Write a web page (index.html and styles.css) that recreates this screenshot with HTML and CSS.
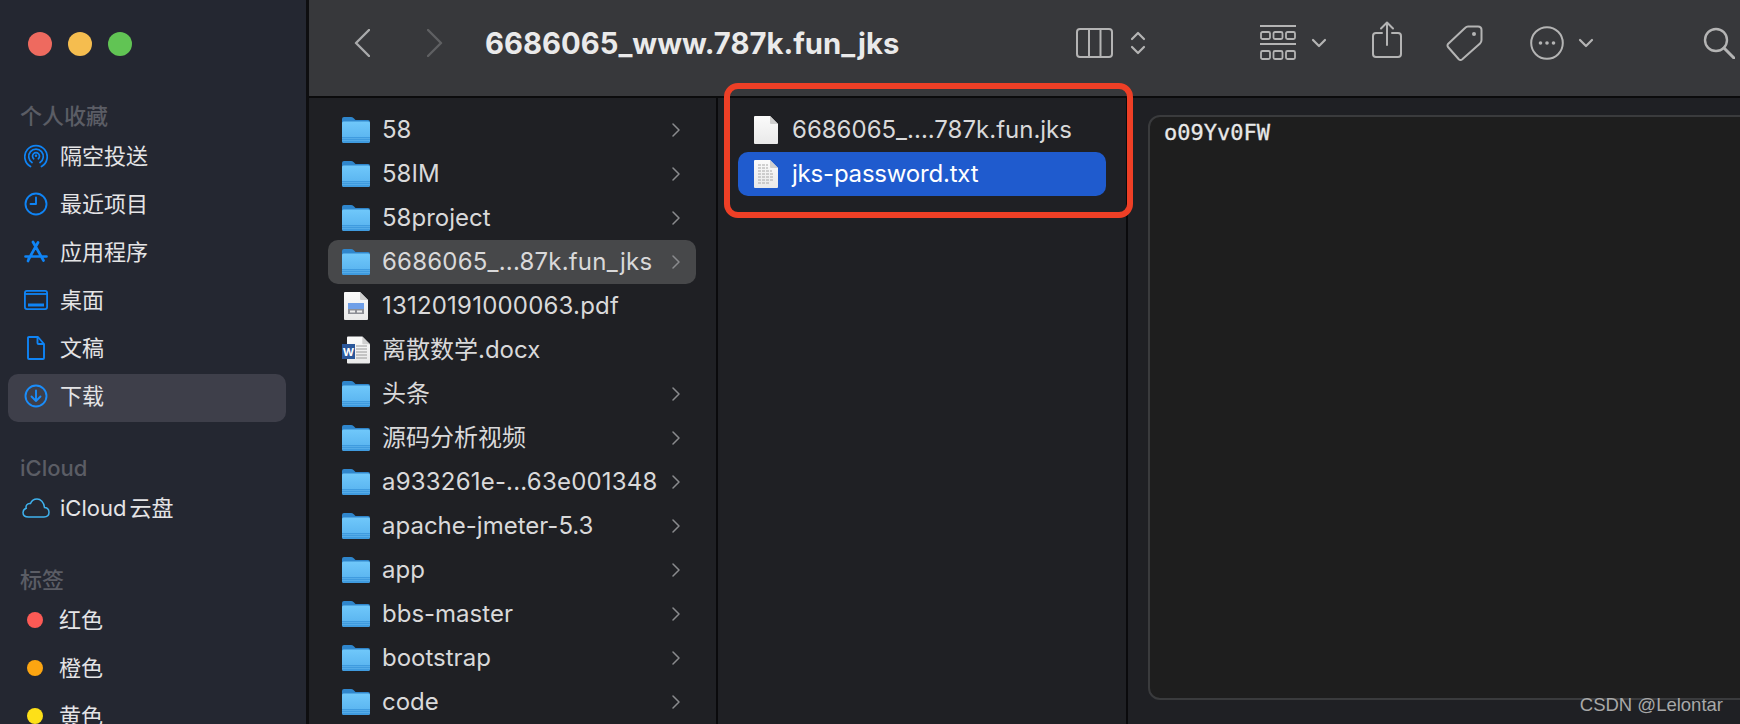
FILE: index.html
```html
<!DOCTYPE html>
<html lang="zh-CN">
<head>
    <meta charset="UTF-8">
    <meta name="viewport" content="width=device-width, initial-scale=1.0">
    <title>6686065_www.787k.fun_jks</title>
    <link rel="stylesheet" href="styles.css">
</head>
<body>

<svg class="defs" width="0" height="0" aria-hidden="true">
    <defs>
        <linearGradient id="folderFront" x1="0" y1="0" x2="0" y2="1">
            <stop offset="0" stop-color="#70c8fa"/>
            <stop offset="1" stop-color="#55b0ee"/>
        </linearGradient>
        <linearGradient id="paper" x1="0" y1="0" x2="0" y2="1">
            <stop offset="0" stop-color="#fbfbfb"/>
            <stop offset="1" stop-color="#e9e9e9"/>
        </linearGradient>
        <symbol id="folder" viewBox="0 0 28 26">
            <path d="M0 2q0-2 2-2h7q1.500 0 2.500 1l2 2H26q2 0 2 2v6H0z" fill="#2f86cc"/>
            <path d="M0 6q0-1.500 1.500-1.500h25Q28 4.500 28 6v18q0 2-2 2H2q-2 0-2-2z" fill="url(#folderFront)"/>
            <path d="M0 20h28v4q0 2-2 2H2q-2 0-2-2z" fill="#3f9bdf"/>
            <path d="M0 21.500h28M0 23.500h28" stroke="#6cbcf0" stroke-width=".5"/>
        </symbol>
        <symbol id="chevron" viewBox="0 0 8 14">
            <path d="M1 1l6 6-6 6" fill="none" stroke="#8a8b8e" stroke-width="1.500" stroke-linecap="round" stroke-linejoin="round"/>
        </symbol>
        <symbol id="page" viewBox="0 0 24 28">
            <path d="M1 0h15l8 8v19q0 1-1 1H1q-1 0-1-1V1q0-1 1-1z" fill="url(#paper)"/>
            <path d="M16 0l8 8h-7q-1 0-1-1z" fill="#cfcfcf"/>
        </symbol>
        <symbol id="down" viewBox="0 0 16 10">
            <path d="M2 2l6 6 6-6" fill="none" stroke="#b4b4b4" stroke-width="2.200" stroke-linecap="round" stroke-linejoin="round"/>
        </symbol>
    </defs>
</svg>

<div class="window">
    <aside class="sidebar">
        <div class="traffic">
            <span class="light light-red"></span>
            <span class="light light-yellow"></span>
            <span class="light light-green"></span>
        </div>

        <div class="side-title first">个人收藏</div>
        <div class="side-item">
            <svg class="side-icon" viewBox="0 0 24 24" fill="none" stroke="#0f84f5" stroke-width="1.700" stroke-linecap="round">
                <path d="M6.500 22.500a11.200 11.200 0 1 1 11 0"/>
                <path d="M8 18.500a7.300 7.300 0 1 1 8 0"/>
                <path d="M9.700 14.800a3.500 3.500 0 1 1 4.600 0"/>
                <circle cx="12" cy="11.800" r="1.200" fill="#0f84f5" stroke="none"/>
            </svg>
            <span>隔空投送</span>
        </div>
        <div class="side-item">
            <svg class="side-icon" viewBox="0 0 24 24" fill="none" stroke="#0f84f5" stroke-width="1.900" stroke-linecap="round" stroke-linejoin="round">
                <circle cx="12" cy="12" r="10.500"/>
                <path d="M12 5.500V12H6.500"/>
            </svg>
            <span>最近项目</span>
        </div>
        <div class="side-item">
            <svg class="side-icon" viewBox="0 0 24 24" fill="none" stroke="#0f84f5" stroke-width="2.700" stroke-linecap="round">
                <path d="M9 2l10.500 18.500M14 2.500L5 18.500M1.500 16.500h21"/>
                <path d="M4 21l1-2.500"/>
            </svg>
            <span>应用程序</span>
        </div>
        <div class="side-item">
            <svg class="side-icon" viewBox="0 0 24 20" fill="none" stroke="#0f84f5" stroke-width="1.800">
                <rect x=".9" y=".9" width="22.200" height="18.200" rx="2"/>
                <path d="M1 4h22"/>
                <rect x="4" y="13.500" width="16" height="3" fill="#0f84f5" stroke="none"/>
            </svg>
            <span>桌面</span>
        </div>
        <div class="side-item">
            <svg class="side-icon" viewBox="0 0 24 24" fill="none" stroke="#0f84f5" stroke-width="1.900" stroke-linejoin="round">
                <path d="M5 1h9l6 7v14q0 1-1 1H5q-1 0-1-1V2q0-1 1-1z"/>
                <path d="M13.500 1v6q0 1 1 1H20"/>
            </svg>
            <span>文稿</span>
        </div>
        <div class="side-item active">
            <svg class="side-icon" viewBox="0 0 24 24" fill="none" stroke="#1a8dfa" stroke-width="1.900" stroke-linecap="round" stroke-linejoin="round">
                <circle cx="12" cy="12" r="10.500"/>
                <path d="M12 6.500V17M7.500 12.500L12 17l4.500-4.500"/>
            </svg>
            <span>下载</span>
        </div>

        <div class="side-title">iCloud</div>
        <div class="side-item">
            <svg class="side-icon cloud" viewBox="0 0 28 20" fill="none" stroke="#3fb2ee" stroke-width="1.500">
                <path d="M6.500 19H22q5 0 5-4.700 0-4.300-4.500-4.800C22 4 18.500 1 15 1c-3.500 0-5.500 2-6.500 4.500C5 5 3.500 8 4.200 10.200 2 11 1 12.800 1 14.500 1 17 3 19 6.500 19z"/>
            </svg>
            <span class="tight-space">iCloud 云盘</span>
        </div>

        <div class="side-title">标签</div>
        <div class="side-item"><i class="dot dot-red"></i><span>红色</span></div>
        <div class="side-item"><i class="dot dot-orange"></i><span>橙色</span></div>
        <div class="side-item"><i class="dot dot-yellow"></i><span>黄色</span></div>
    </aside>

    <main class="main">
        <header class="toolbar">
            <svg class="nav-arrow" viewBox="0 0 16 28" fill="none" stroke="#a9aaab" stroke-width="2.400" stroke-linecap="round" stroke-linejoin="round"><path d="M15 1L2 14l13 13"/></svg>
            <svg class="nav-arrow forward" viewBox="0 0 16 28" fill="none" stroke="#5f6062" stroke-width="2.400" stroke-linecap="round" stroke-linejoin="round"><path d="M1 1l13 13L1 27"/></svg>
            <h1 class="path-title">6686065_www.787k.fun_jks</h1>

            <svg class="tool tool-columns" viewBox="0 0 37 30" fill="none" stroke="#b4b4b4" stroke-width="2"><rect x="1" y="1" width="35" height="28" rx="3"/><path d="M13 1v28M24.500 1v28"/></svg>
            <svg class="tool tool-updown" viewBox="0 0 16 26" fill="none" stroke="#b4b4b4" stroke-width="2.200" stroke-linecap="round" stroke-linejoin="round"><path d="M2 9l6-6 6 6M2 17l6 6 6-6"/></svg>
            <svg class="tool tool-grid" viewBox="0 0 36 36" fill="none" stroke="#b4b4b4" stroke-width="1.800">
                <path d="M0 1h36M0 19h36" stroke-width="2.200"/>
                <rect x="1" y="7" width="9" height="7" rx="1.500"/><rect x="13.500" y="7" width="9" height="7" rx="1.500"/><rect x="26" y="7" width="9" height="7" rx="1.500"/>
                <rect x="1" y="26" width="9" height="8" rx="1.500"/><rect x="13.500" y="26" width="9" height="8" rx="1.500"/><rect x="26" y="26" width="9" height="8" rx="1.500"/>
            </svg>
            <svg class="tool tool-caret"><use href="#down"/></svg>
            <svg class="tool tool-share" viewBox="0 0 30 38" fill="none" stroke="#b4b4b4" stroke-width="2" stroke-linecap="round" stroke-linejoin="round"><path d="M10 12H4q-3 0-3 3v18q0 3 3 3h22q3 0 3-3V15q0-3-3-3h-6M15 24V2M9 7.500L15 1.500l6 6"/></svg>
            <svg class="tool tool-tag" viewBox="0 0 37 36" fill="none" stroke="#b4b4b4" stroke-width="2" stroke-linejoin="round"><path d="M22 1.500h10q3.500 0 3.500 3.500v10q0 2-1.500 3.500L16 34.500q-1.500 1-3 0L2 22q-1-1.500 0-3L19 3q1.500-1.500 3-1.500z"/><circle cx="28" cy="9" r="2" fill="#b4b4b4" stroke="none"/></svg>
            <svg class="tool tool-more" viewBox="0 0 34 34" fill="none" stroke="#b4b4b4" stroke-width="2"><circle cx="17" cy="17" r="15.800"/><g fill="#b4b4b4" stroke="none"><circle cx="10.500" cy="17" r="1.800"/><circle cx="17" cy="17" r="1.800"/><circle cx="23.500" cy="17" r="1.800"/></g></svg>
            <svg class="tool tool-caret second"><use href="#down"/></svg>
            <svg class="tool tool-search" viewBox="0 0 32 32" fill="none" stroke="#b4b4b4" stroke-width="2.400" stroke-linecap="round"><circle cx="13" cy="13" r="11"/><path d="M21 21l10 10" stroke-width="3"/></svg>
        </header>

        <div class="columns">
            <section class="column column-parent">
                <div class="row"><svg class="file-icon"><use href="#folder"/></svg><span class="name">58</span><svg class="arrow"><use href="#chevron"/></svg></div>
                <div class="row"><svg class="file-icon"><use href="#folder"/></svg><span class="name">58IM</span><svg class="arrow"><use href="#chevron"/></svg></div>
                <div class="row"><svg class="file-icon"><use href="#folder"/></svg><span class="name">58project</span><svg class="arrow"><use href="#chevron"/></svg></div>
                <div class="row open"><svg class="file-icon"><use href="#folder"/></svg><span class="name digits">6686065_...87k.fun_jks</span><svg class="arrow"><use href="#chevron"/></svg></div>
                <div class="row">
                    <svg class="file-icon" viewBox="0 0 28 28">
                        <use href="#page" x="2" width="24" height="28"/>
                        <rect x="6" y="11" width="16" height="6" fill="#6f9fe8"/>
                        <rect x="6" y="17" width="16" height="5" fill="#8d8f96"/>
                        <rect x="8" y="18.500" width="5" height="2" fill="#eee"/>
                        <rect x="15" y="18.500" width="5" height="2" fill="#eee"/>
                    </svg>
                    <span class="name digits">13120191000063.pdf</span>
                </div>
                <div class="row">
                    <svg class="file-icon" viewBox="0 0 28 28">
                        <use href="#page" x="5" width="23" height="28"/>
                        <path d="M14 10h11M14 13h11M14 16h11M14 19h11M14 22h11" stroke="#9a9a9a"/>
                        <rect x="0" y="8" width="13" height="15" fill="#2b579a"/>
                        <text class="word-mark" x="6.500" y="19.500" text-anchor="middle">W</text>
                    </svg>
                    <span class="name cjk">离散数学.docx</span>
                </div>
                <div class="row"><svg class="file-icon"><use href="#folder"/></svg><span class="name cjk">头条</span><svg class="arrow"><use href="#chevron"/></svg></div>
                <div class="row"><svg class="file-icon"><use href="#folder"/></svg><span class="name cjk">源码分析视频</span><svg class="arrow"><use href="#chevron"/></svg></div>
                <div class="row"><svg class="file-icon"><use href="#folder"/></svg><span class="name digits">a933261e-...63e001348</span><svg class="arrow"><use href="#chevron"/></svg></div>
                <div class="row"><svg class="file-icon"><use href="#folder"/></svg><span class="name">apache-jmeter-5.3</span><svg class="arrow"><use href="#chevron"/></svg></div>
                <div class="row"><svg class="file-icon"><use href="#folder"/></svg><span class="name">app</span><svg class="arrow"><use href="#chevron"/></svg></div>
                <div class="row"><svg class="file-icon"><use href="#folder"/></svg><span class="name">bbs-master</span><svg class="arrow"><use href="#chevron"/></svg></div>
                <div class="row"><svg class="file-icon"><use href="#folder"/></svg><span class="name">bootstrap</span><svg class="arrow"><use href="#chevron"/></svg></div>
                <div class="row"><svg class="file-icon"><use href="#folder"/></svg><span class="name">code</span><svg class="arrow"><use href="#chevron"/></svg></div>
            </section>

            <section class="column column-files">
                <div class="row">
                    <svg class="file-icon doc-icon"><use href="#page"/></svg>
                    <span class="name">6686065_....787k.fun.jks</span>
                </div>
                <div class="row selected">
                    <svg class="file-icon doc-icon" viewBox="0 0 24 28">
                        <use href="#page" width="24" height="28"/>
                        <path d="M4 5h10M4 8h10M4 11h14M4 14h16M4 17h16M4 20h16M4 23h12" stroke="#a8a8a8" stroke-dasharray="3 1"/>
                    </svg>
                    <span class="name">jks-password.txt</span>
                </div>
            </section>

            <section class="preview">
                <div class="preview-box">o09Yv0FW</div>
            </section>
        </div>
    </main>

    <div class="annotation"></div>
    <div class="watermark">CSDN @Lelontar</div>
</div>

</body>
</html>
```

FILE: styles.css
```css
html, body {
    margin: 0;
    padding: 0;
    background-color: #1f2024;
}

.defs {
    position: absolute;
}

.window {
    position: relative;
    display: flex;
    width: 1740px;
    height: 724px;
    overflow: hidden;
    font-family: Inter, "Noto Sans CJK SC", sans-serif;
}

/* Sidebar */
.sidebar {
    flex: none;
    box-sizing: border-box;
    width: 309px;
    padding: 32px 20px 0 8px;
    background-color: #242731;
    border-right: 3px solid #0e0e10;
    color: #e4e4e6;
    font-size: 22px;
}

.traffic {
    display: flex;
    gap: 16px;
    padding-left: 20px;
}

.light {
    width: 24px;
    height: 24px;
    border-radius: 50%;
}

.light-red { background-color: #ee6a5f; }
.light-yellow { background-color: #f5bd4f; }
.light-green { background-color: #61c454; }

.side-title {
    height: 32px;
    margin-top: 32px;
    padding-left: 12px;
    color: #5b5d65;
    font-size: 22px;
    font-weight: 500;
    line-height: 29px;
}

.side-title.first {
    margin-top: 46px;
}

.side-item {
    display: flex;
    align-items: center;
    gap: 12px;
    box-sizing: border-box;
    height: 48px;
    padding: 0 0 5px 16px;
    border-radius: 10px;
    white-space: nowrap;
}

.side-item span {
    padding-bottom: 3px;
}

.side-item.active {
    background-color: #3e3f4a;
}

.tight-space {
    word-spacing: -3px;
}

.side-icon {
    flex: none;
    width: 24px;
    height: 24px;
}

.side-icon.cloud {
    width: 28px;
    margin-left: -2px;
    margin-right: -2px;
}

.dot {
    flex: none;
    width: 16px;
    height: 16px;
    margin: 0 4px 0 3px;
    border-radius: 50%;
}

.dot-red { background-color: #fc5a55; }
.dot-orange { background-color: #fca511; }
.dot-yellow { background-color: #fde018; }

/* Toolbar */
.main {
    flex: 1;
    display: flex;
    flex-direction: column;
    min-width: 0;
}

.toolbar {
    flex: none;
    display: flex;
    align-items: center;
    box-sizing: border-box;
    height: 98px;
    padding: 0 0 10px 45px;
    background-color: #37383b;
    border-bottom: 2px solid #0b0b0c;
}

.nav-arrow {
    flex: none;
    width: 16px;
    height: 28px;
}

.nav-arrow.forward {
    margin-left: 57px;
}

.path-title {
    flex: none;
    width: 591px;
    margin: 0 0 0 42px;
    color: #eaeaea;
    font-size: 29.25px;
    font-weight: 700;
    white-space: nowrap;
}

.tool {
    flex: none;
}

.tool-columns { width: 37px; height: 30px; }
.tool-updown { width: 16px; height: 26px; margin-left: 17px; }
.tool-grid { width: 36px; height: 36px; margin-left: 114px; }
.tool-caret { width: 16px; height: 10px; margin-left: 15px; }
.tool-caret.second { margin-left: 14px; }
.tool-share { width: 30px; height: 38px; margin-left: 45px; margin-top: -7px; }
.tool-tag { width: 37px; height: 36px; margin-left: 44px; }
.tool-more { width: 34px; height: 34px; margin-left: 47px; }
.tool-search { width: 32px; height: 32px; margin-left: 109px; }

/* Columns */
.columns {
    flex: 1;
    display: flex;
    min-height: 0;
    color: #d9d9da;
    font-size: 24px;
}

.column {
    flex: none;
    box-sizing: border-box;
    padding-top: 10px;
    border-right: 2px solid #0a0a0c;
}

.column-parent {
    width: 409px;
    padding-left: 19px;
    padding-right: 20px;
}

.column-files {
    width: 410px;
    padding-left: 20px;
    padding-right: 20px;
}

.row {
    display: flex;
    align-items: center;
    height: 44px;
    padding: 0 16px 0 14px;
    border-radius: 10px;
    white-space: nowrap;
}

.row.open {
    background-color: #47484a;
}

.row.selected {
    background-color: #1f5bce;
    color: #fff;
    letter-spacing: -0.2px;
}

.file-icon {
    flex: none;
    width: 28px;
    height: 26px;
    margin-right: 12px;
}

.file-icon[viewBox="0 0 28 28"] {
    height: 28px;
}

.doc-icon {
    width: 24px;
    height: 28px;
    margin: 0 14px 0 2px;
}

.word-mark {
    fill: #fff;
    font-size: 11px;
    font-weight: 700;
}

.name {
    flex: 1;
    padding-bottom: 2px;
}

/* SF digits run a bit wider than Inter's */
.name.digits {
    letter-spacing: 0.2px;
}

/* CJK fallback sits lower in the line box than the latin rows */
.name.cjk {
    padding-bottom: 6px;
}

.arrow {
    flex: none;
    width: 8px;
    height: 14px;
}

/* Text preview */
.preview {
    flex: 1;
    display: flex;
    padding: 17px 0 24px 20px;
}

.preview-box {
    flex: 1;
    margin-right: -20px;
    padding: 2px 14px;
    background-color: #1e1e1e;
    border: 2px solid #3a3b3d;
    border-radius: 12px;
    color: #e8e8e8;
    font-family: "DejaVu Sans Mono", monospace;
    font-size: 22px;
    line-height: 28px;
    -webkit-text-stroke: 0.3px #e8e8e8;
}

/* Overlays: the red annotation and the watermark sit on top of the window */
.annotation {
    position: absolute;
    left: 724px;
    top: 83px;
    box-sizing: border-box;
    width: 409px;
    height: 135px;
    border: 6px solid #ee3f26;
    border-radius: 14px;
}

.watermark {
    position: absolute;
    right: 17px;
    bottom: 8px;
    color: #a8a8a8;
    font-family: "Liberation Sans", sans-serif;
    font-size: 18.500px;
}
```
